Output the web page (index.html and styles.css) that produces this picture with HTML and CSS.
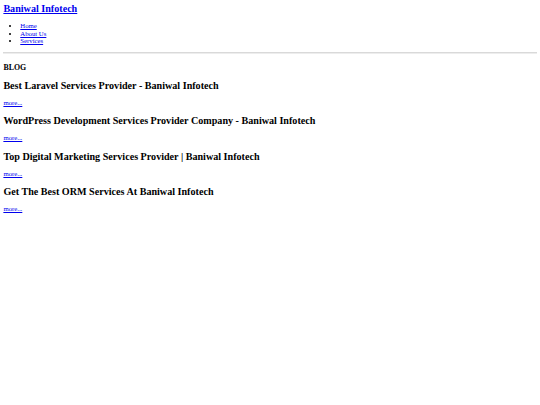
FILE: index.html
```html
<!DOCTYPE html>
<html>
<head>
<meta charset="utf-8">
<title>Baniwal Infotech</title>
<link rel="stylesheet" href="styles.css">
</head>
<body>
<header class="site-header">
<h1 class="site-title"><a href="#">Baniwal Infotech</a></h1>
<ul class="nav">
<li><a href="#">Home</a></li>
<li><a href="#">About Us</a></li>
<li><a href="#">Services</a></li>
</ul>
</header>
<hr class="rule">
<main class="content">
<h3 class="section-title">BLOG</h3>
<article class="post">
<h2 class="post-title">Best Laravel Services Provider - Baniwal Infotech</h2>
<p class="more-line"><a class="more" href="#">more...</a></p>
</article>
<article class="post">
<h2 class="post-title">WordPress Development Services Provider Company - Baniwal Infotech</h2>
<p class="more-line"><a class="more" href="#">more...</a></p>
</article>
<article class="post">
<h2 class="post-title">Top Digital Marketing Services Provider | Baniwal Infotech</h2>
<p class="more-line"><a class="more" href="#">more...</a></p>
</article>
<article class="post">
<h2 class="post-title">Get The Best ORM Services At Baniwal Infotech</h2>
<p class="more-line"><a class="more" href="#">more...</a></p>
</article>
</main>
</body>
</html>
```
FILE: styles.css
```css
html { background: #fff; }
body {
  margin: 3.375px;
  font-family: "Liberation Serif", "Times New Roman", serif;
  font-size: 6.75px;
  line-height: 1.15;
  color: #000;
}
a { color: #0000ee; }
.site-title {
  font-size: 10.125px;
  font-weight: bold;
  margin: 0;
}
.nav {
  margin: 7.3px 0 0;
  padding-left: 16.9px;
  line-height: 7.4px;
}
.rule {
  margin: 7.5px 0 0;
  height: 0;
  border: 0;
  border-top: 1px solid #d9d9d9;
  border-bottom: 1px solid #ededed;
}
.section-title {
  font-size: 7.9px;
  font-weight: bold;
  margin: 9.3px 0 0;
}
.post { margin-top: 8.5px; }
.section-title + .post { margin-top: 7.4px; }
.post-title {
  font-size: 10.125px;
  font-weight: bold;
  margin: 0;
}
.more-line { margin: 7.5px 0 0; }
```
